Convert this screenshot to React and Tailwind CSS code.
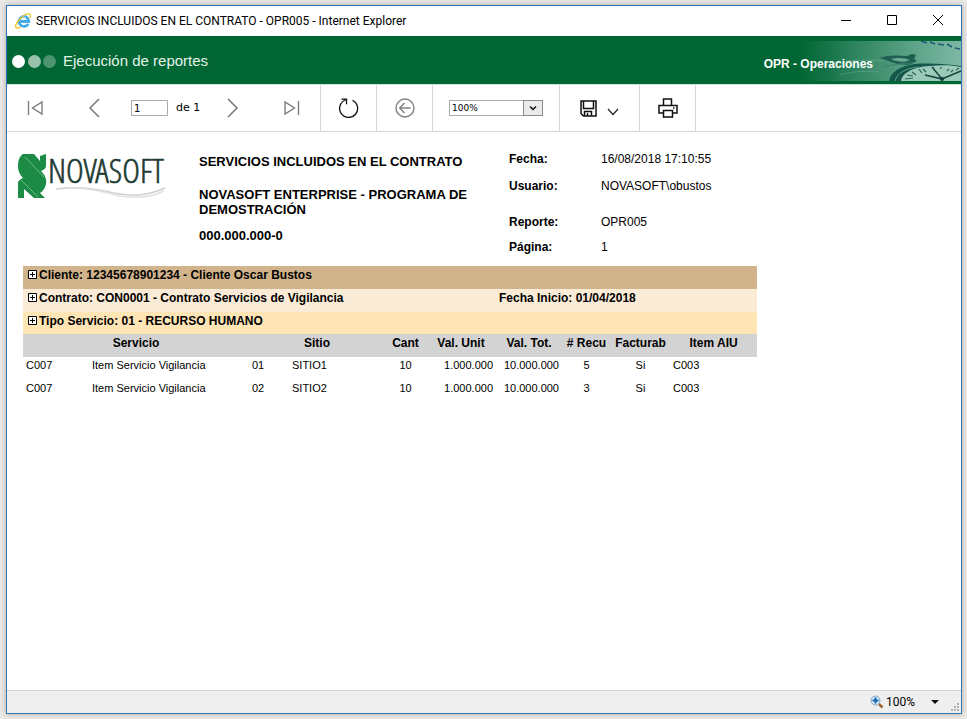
import { useState } from "react";

const rows = [
  { code: "C007", item: "Item Servicio Vigilancia", num: "01", site: "SITIO1", qty: 10, unit: "1.000.000", total: "10.000.000", recu: 5, billed: "Si", aiu: "C003" },
  { code: "C007", item: "Item Servicio Vigilancia", num: "02", site: "SITIO2", qty: 10, unit: "1.000.000", total: "10.000.000", recu: 3, billed: "Si", aiu: "C003" },
];

const meta = [
  { label: "Fecha:", value: "16/08/2018 17:10:55", style: "h-[27px]" },
  { label: "Usuario:", value: "NOVASOFT\\obustos", style: "h-9" },
  { label: "Reporte:", value: "OPR005", style: "h-[25px]" },
  { label: "Página:", value: "1", style: "h-5" },
];

function IeLogo() {
  return (
    <svg className="w-4 h-4 shrink-0" viewBox="0 0 16 16" fill="none">
      <path d="M13.300 10.800a5 5 0 1 1 .6-2.400H5.600" stroke="#3fa9e4" strokeWidth="2.600" />
      <path d="M4 8.700h10.800" stroke="#3fa9e4" strokeWidth="1.800" />
      <path d="M6 4.600a4 4 0 0 1 5 .2" stroke="#a5defa" strokeWidth="1" />
      <path d="M14.800 5c1-2 .9-3.600-.4-4C12.300.4 8 2.600 4.600 6.300 1.400 9.700-.200 13.400 1.100 14.700c.8.8 2.600.3 4.400-.8" stroke="#eec326" strokeWidth="1.300" />
    </svg>
  );
}

function TitleBar() {
  return (
    <header className="flex items-center h-[30px] pl-2 bg-white">
      <IeLogo />
      <h1 className="ml-[5px] flex-1 font-[Roboto,sans-serif] text-[12px] leading-4 whitespace-nowrap">
        SERVICIOS INCLUIDOS EN EL CONTRATO - OPR005 - Internet Explorer
      </h1>
      <button aria-label="Minimizar" className="w-[46px] h-full flex items-center justify-center">
        <svg className="w-3 h-3" viewBox="0 0 12 12" stroke="#000">
          <path d="M1 5.500h10" />
        </svg>
      </button>
      <button aria-label="Maximizar" className="w-[46px] h-full flex items-center justify-center">
        <svg className="w-3 h-3" viewBox="0 0 12 12" fill="none" stroke="#000">
          <path d="M1.500.5h9v9h-9z" />
        </svg>
      </button>
      <button aria-label="Cerrar" className="w-[46px] h-full flex items-center justify-center">
        <svg className="w-3 h-3" viewBox="0 0 12 12" stroke="#000">
          <path d="M1 0l10 10M11 0L1 10" />
        </svg>
      </button>
    </header>
  );
}

function ClockArt() {
  return (
    <svg className="absolute right-0 top-[5px] w-[160px] h-10" viewBox="0 0 160 40" fill="none">
      <defs>
        <linearGradient id="fade" x1="0" x2="1" y1="0" y2="0">
          <stop offset="0" stopColor="#006633" />
          <stop offset="0.35" stopColor="#2f8560" />
          <stop offset="0.7" stopColor="#5da388" />
          <stop offset="1" stopColor="#7db8a4" />
        </linearGradient>
      </defs>
      <path d="M0 0h160v40H0z" fill="url(#fade)" />
      <path d="M24 24c20-5 40-6 58-4M38 34c16-4 26-4 40-3" stroke="#8cc2ad" strokeOpacity="0.3" />
      <path d="M120 0l6 2M129 1l5 2M137 3l6 1M146 3l5 3M154 7l5 1" stroke="#1c5a75" strokeWidth="1.500" />
      {/* Pocket watch */}
      <path d="M78 17c8-3 18-3 28-2l5-2 4 1-2 4 3 2-6 3c-7 2-14 0-20-2-4-2-8-3-12-4z" fill="#1d5f50" />
      <path d="M90 18c8-2 14-1 19 1-5 3-13 2-19-1z" fill="#6aa890" />
      <path d="M82 26c10-2 18-4 30-4" stroke="#3d8069" />
      <path d="M88 40c2-9 10-15 26-17 16-1 32 0 46 2v15z" fill="#15564a" />
      <path d="M100 40c1-8 12-14 28-15 12-1 23-1 32 1v14z" fill="#9bcbb8" />
      <path d="M94 40c2-8 11-13 24-14" stroke="#5d9f87" />
      <path d="M141 38l-10-12M141 38l19-8M141 38l-17-4" stroke="#173f3a" strokeWidth="1.400" />
      <path d="M111 31l4 3M106 34l6 1M104 38l8-1M118 28l3 4M122 28l3 3M132 26l1 2M140 26v2M148 28l-2 2M152 29l-2 2M158 27l-3 2" stroke="#2b6256" strokeWidth="1.200" />
      <circle cx="141" cy="38" r="2" fill="#173f3a" />
    </svg>
  );
}

function Banner() {
  return (
    <div className="relative flex items-center justify-between h-12 pl-[5px] pr-[88px] bg-[#006633] text-white">
      <ClockArt />
      <div className="flex items-center pt-0.5">
        <span className="w-[13px] h-[13px] rounded-full bg-white" />
        <span className="w-[13px] h-[13px] ml-[3px] rounded-full bg-[#99c2ad]" />
        <span className="w-[13px] h-[13px] ml-0.5 rounded-full bg-[#4d9470]" />
        <h2 className="ml-[7px] text-[15px] leading-5 text-[#e3f3ea]">Ejecución de reportes</h2>
      </div>
      <span className="relative mt-2 text-[12px] leading-4 font-bold">OPR - Operaciones</span>
    </div>
  );
}

function ToolButton({ label, children, className = "" }) {
  return (
    <button aria-label={label} className={`flex items-center justify-center w-8 h-8 ${className}`}>
      {children}
    </button>
  );
}

function Toolbar() {
  const [page, setPage] = useState("1");
  const [zoom, setZoom] = useState("100%");

  return (
    <div className="flex h-12 border-t border-t-[#cfe6da] border-b border-b-[#d6d6d6] font-['DejaVu_Sans',sans-serif]">
      {/* Page navigation */}
      <div className="flex items-center pl-3 w-[314px] border-r border-[#d6d6d6]">
        <ToolButton label="Primera página">
          <svg className="w-4 h-4" viewBox="0 0 16 16" fill="none" stroke="#777" strokeWidth="1.300">
            <path d="M1.500 1v14M15 2v12L5.500 8z" />
          </svg>
        </ToolButton>
        <ToolButton label="Página anterior" className="ml-[27px]">
          <svg className="w-3 h-5" viewBox="0 0 12 20" fill="none" stroke="#777" strokeWidth="1.500">
            <path d="M11 1L2 10l9 9" />
          </svg>
        </ToolButton>
        <input
          aria-label="Página actual"
          value={page}
          onChange={(e) => setPage(e.target.value)}
          className="ml-[21px] w-[37px] h-4 pl-0.5 border border-[#ababab] text-[10px] leading-3"
        />
        <span className="ml-2 w-6 text-[11px] leading-4 whitespace-nowrap">de 1</span>
        <ToolButton label="Página siguiente" className="ml-[17px]">
          <svg className="w-3 h-5" viewBox="0 0 12 20" fill="none" stroke="#777" strokeWidth="1.500">
            <path d="M1 1l9 9-9 9" />
          </svg>
        </ToolButton>
        <ToolButton label="Última página" className="ml-[27px]">
          <svg className="w-4 h-4" viewBox="0 0 16 16" fill="none" stroke="#777" strokeWidth="1.300">
            <path d="M14.500 1v14M1 2v12L10.500 8z" />
          </svg>
        </ToolButton>
      </div>

      <div className="flex items-center justify-center w-14 border-r border-[#d6d6d6]">
        <ToolButton label="Actualizar">
          <svg className="w-5 h-5" viewBox="0 0 20 20" fill="none" stroke="#111" strokeWidth="1.300">
            <path d="M13.500 2.300A9 9 0 1 1 6.500 2M2.500 1.200L7.500 1.200v5" />
          </svg>
        </ToolButton>
      </div>

      <div className="flex items-center justify-center w-14 border-r border-[#d6d6d6]">
        <ToolButton label="Volver">
          <svg className="w-5 h-5" viewBox="0 0 20 20" fill="none" stroke="#808080" strokeWidth="1.400">
            <circle cx="10" cy="10" r="9" />
            <path d="M15.500 10H5M9.500 5L4.700 10l4.800 5" />
          </svg>
        </ToolButton>
      </div>

      <div className="flex items-center pl-4 w-[127px] border-r border-[#d6d6d6]">
        <div className="relative w-[94px] h-4">
          <select
            aria-label="Zoom"
            value={zoom}
            onChange={(e) => setZoom(e.target.value)}
            className="block w-full h-4 pl-0.5 appearance-none border border-[#ababab] bg-white text-[9px] leading-3"
          >
            <option>100%</option>
            <option>150%</option>
            <option>200%</option>
          </select>
          <span className="absolute right-0 top-0 flex items-center justify-center w-5 h-4 border border-[#8a8a8a] bg-[#eaeaea] pointer-events-none">
            <svg className="w-2 h-2" viewBox="0 0 8 8" fill="none" stroke="#111" strokeWidth="1.500">
              <path d="M1 2.500l3 3 3-3" />
            </svg>
          </span>
        </div>
      </div>

      <div className="flex items-center justify-center w-20 border-r border-[#d6d6d6]">
        <button aria-label="Exportar" className="flex items-center gap-2.5 h-8">
          <svg className="w-[17px] h-[17px]" viewBox="0 0 17 17" fill="none" stroke="#111" strokeWidth="1.500">
            <path d="M1 1h15v15H3.500L1 13.500z" />
            <path d="M3.500 1v7.500h10V1M4.500 16v-4.500h7V16M7.500 13v3" />
          </svg>
          <svg className="w-3 h-3 mt-2" viewBox="0 0 12 12" fill="none" stroke="#222" strokeWidth="1.200">
            <path d="M1 3l5 5.500L11 3" />
          </svg>
        </button>
      </div>

      <div className="flex items-center justify-center w-14 border-r border-[#d6d6d6]">
        <ToolButton label="Imprimir">
          <svg className="w-5 h-5" viewBox="0 0 20 20" fill="none" stroke="#111" strokeWidth="1.500">
            <path d="M5.500 7.500V1h8v6.500M5.500 15H1V7.500h18V15h-4.500" />
            <path d="M5.500 12.500h9V19h-9zM15 10h1.500" />
          </svg>
        </ToolButton>
      </div>
    </div>
  );
}

function NovasoftLogo() {
  return (
    <svg className="w-[152px] h-[60px]" viewBox="0 -8 152 60" fill="none" role="img" aria-label="Novasoft">
      <path
        d="M5 2h11l6 7V4l6-2v12c0 2-2 4-5 5 4 4 6 8 5 13-1 5-4 8-6 9l5 5H16L6 37v9H0V31c0-2 2-4 5-5-4-4-5-8-5-12C0 8 2 4 5 2z"
        fill="#1c8b45"
      />
      <path d="M7 5l19 20M2 27l18 18" stroke="#6fb98a" />
      <text x="30" y="31" fontSize="34" fill="#1d3b33" stroke="#1d3b33" strokeWidth="0.600" className="font-['Open_Sans_Condensed_Light','Open_Sans_Condensed',sans-serif]">
        NOVASOFT
      </text>
      <path d="M38 37c26-3 42 0 58 4 18 4 36 2 51-5" stroke="#cfcfcf" strokeWidth="1.500" />
      <path d="M50 36c24 0 36 4 52 8 18 3 32 1 44-5" stroke="#e2e2e2" strokeWidth="1.500" />
    </svg>
  );
}

function ReportHeader() {
  return (
    <div className="flex h-[134px] pl-[11px]">
      <div className="w-[181px] pt-3 shrink-0">
        <NovasoftLogo />
      </div>
      <div className="w-[310px] pt-[22px] pr-5 shrink-0 text-[13px] leading-[15px] font-bold">
        <h3>SERVICIOS INCLUIDOS EN EL CONTRATO</h3>
        <p className="mt-[18px]">NOVASOFT ENTERPRISE - PROGRAMA DE DEMOSTRACIÓN</p>
        <p className="mt-[11px]">000.000.000-0</p>
      </div>
      <dl className="pt-5 text-[12px] leading-[14px]">
        {meta.map((m) => (
          <div key={m.label} className={`flex ${m.style}`}>
            <dt className="w-[92px] font-bold">{m.label}</dt>
            <dd>{m.value}</dd>
          </div>
        ))}
      </dl>
    </div>
  );
}

function Expand({ label }) {
  return (
    <button aria-label={`Expandir ${label}`} className="inline-block mr-0.5 w-[9px] h-[9px] bg-white">
      <svg className="block w-[9px] h-[9px]" viewBox="0 0 9 9" fill="none" stroke="#000">
        <path d="M.5.5h8v8h-8zM2 4.500h5M4.500 2v5" />
      </svg>
    </button>
  );
}

function ReportTable() {
  return (
    <table className="ml-4 w-[734px] table-fixed border-collapse text-[11px] leading-[14px] [&_td]:px-[3px] [&_td]:pt-px [&_th]:pt-[2px] [&_td]:align-top [&_th]:align-top [&_th]:text-[12px]">
      <colgroup>
        <col className="w-[66px]" />
        <col className="w-[160px]" />
        <col className="w-10" />
        <col className="w-24" />
        <col className="w-[41px]" />
        <col className="w-[70px]" />
        <col className="w-[66px]" />
        <col className="w-[49px]" />
        <col className="w-[59px]" />
        <col className="w-[87px]" />
      </colgroup>
      <thead>
        <tr className="h-[23px] bg-[#d2b48c]">
          <th colSpan={10} className="pl-[5px] text-left">
            <Expand label="cliente" />
            Cliente: 12345678901234 - Cliente Oscar Bustos
          </th>
        </tr>
        <tr className="h-[23px] bg-[#faebd7]">
          <th colSpan={6} className="pl-[5px] text-left">
            <Expand label="contrato" />
            Contrato: CON0001 - Contrato Servicios de Vigilancia
          </th>
          <th colSpan={4} className="pl-[3px] text-left">Fecha Inicio: 01/04/2018</th>
        </tr>
        <tr className="h-[22px] bg-[#ffe4b5]">
          <th colSpan={10} className="pl-[5px] text-left">
            <Expand label="tipo de servicio" />
            Tipo Servicio: 01 - RECURSO HUMANO
          </th>
        </tr>
        <tr className="h-[23px] bg-[#d3d3d3] whitespace-nowrap">
          <th colSpan={2}>Servicio</th>
          <th colSpan={2}>Sitio</th>
          <th>Cant</th>
          <th>Val. Unit</th>
          <th>Val. Tot.</th>
          <th># Recu</th>
          <th>Facturab</th>
          <th>Item AIU</th>
        </tr>
      </thead>
      <tbody>
        {rows.map((row) => (
          <tr key={row.num} className="h-[23px]">
            <td>{row.code}</td>
            <td>{row.item}</td>
            <td>{row.num}</td>
            <td>{row.site}</td>
            <td className="text-center">{row.qty}</td>
            <td className="text-right">{row.unit}</td>
            <td className="text-right">{row.total}</td>
            <td className="text-center">{row.recu}</td>
            <td className="text-center">{row.billed}</td>
            <td>{row.aiu}</td>
          </tr>
        ))}
      </tbody>
    </table>
  );
}

function StatusBar() {
  return (
    <footer className="flex items-center justify-end h-[23px] pr-px border-t border-[#d2d2d2] bg-[#efefef]">
      <button className="flex items-center font-[Roboto,sans-serif] text-[12px] leading-4">
        <svg className="w-[14px] h-[14px] mr-0.5" viewBox="0 0 14 14" fill="none">
          <path d="M9 9l3.500 3.500" stroke="#a0622d" strokeWidth="2.500" />
          <circle cx="5.500" cy="5.500" r="4.500" fill="#d9ecfa" stroke="#7fa3c2" />
          <path d="M5.500 2.500v6M2.500 5.500h6" stroke="#1763b5" strokeWidth="2" />
        </svg>
        100%
        <svg className="w-2 h-1 ml-4" viewBox="0 0 8 4" fill="#111">
          <path d="M0 0h8L4 4z" />
        </svg>
      </button>
      <svg className="w-[9px] h-[9px] ml-3 mb-px self-end" viewBox="0 0 9 9" fill="#b3b3b3">
        <path d="M6 0h2v2H6zM3 3h2v2H3zM6 3h2v2H6zM0 6h2v2H0zM3 6h2v2H3zM6 6h2v2H6z" />
      </svg>
    </footer>
  );
}

function App() {
  return (
    <div className="flex min-h-screen pt-[5px] pb-[5px] pl-1.5 pr-[5px] bg-[#eceae7] text-black font-['Liberation_Sans',Arial,sans-serif]">
      <div className="flex flex-col flex-1 min-w-0 border border-[#2b78b8] bg-white shadow-[0_0_6px_#a8a8a8]">
        <TitleBar />
        <Banner />
        <Toolbar />
        <main className="flex-1">
          <ReportHeader />
          <ReportTable />
        </main>
        <StatusBar />
      </div>
    </div>
  );
}

export default App;
